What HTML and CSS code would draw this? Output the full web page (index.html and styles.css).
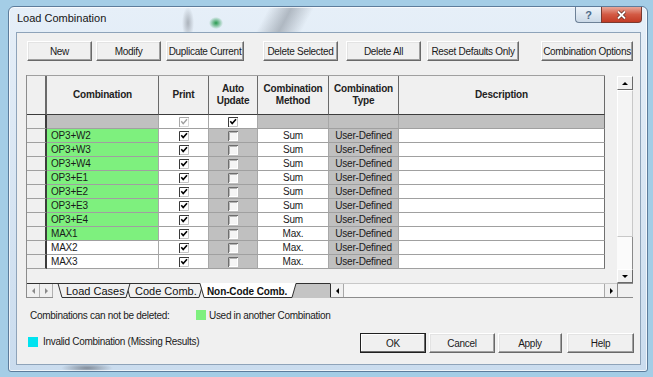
FILE: index.html
```html
<!DOCTYPE html>
<html lang="en">
<head>
    <meta charset="UTF-8">
    <title>Load Combination</title>
    <link rel="stylesheet" href="styles.css">
</head>
<body>
    <svg class="defs" width="0" height="0" aria-hidden="true">
        <defs>
            <symbol id="cb-on" viewBox="0 0 10 10">
                <rect width="10" height="10" fill="#fff"/>
                <path d="M0.5 10V0.5H10" fill="none" stroke="#3a3a3a"/>
                <path d="M9.5 1V9.5H1" fill="none" stroke="#c4c4c4"/>
                <path d="M2.3 4.3L4.2 6.6L8 2.2" fill="none" stroke="#000" stroke-width="1.6"/>
            </symbol>
            <symbol id="cb-dis" viewBox="0 0 10 10">
                <rect width="10" height="10" fill="#fff"/>
                <path d="M0.5 10V0.5H10" fill="none" stroke="#a8a8a8"/>
                <path d="M9.5 1V9.5H1" fill="none" stroke="#d8d8d8"/>
                <path d="M2.3 4.3L4.2 6.6L8 2.2" fill="none" stroke="#a0a0a0" stroke-width="1.4"/>
            </symbol>
            <symbol id="cb-off" viewBox="0 0 10 10">
                <rect width="10" height="10" fill="#f5f5f5"/>
                <path d="M0.5 10V0.5H10" fill="none" stroke="#6e6e6e"/>
                <path d="M1.5 9V1.5H9" fill="none" stroke="#b4b4b4"/>
                <path d="M9.5 1V9.5H1" fill="none" stroke="#ffffff"/>
            </symbol>
        </defs>
    </svg>

    <div class="window">
        <div class="titlebar">
            <span class="title">Load Combination</span>
            <div class="caption">
                <span class="cap-help">?</span>
                <span class="cap-close">
                    <svg width="11" height="10" viewBox="0 0 11 10">
                        <path d="M2 1.5L9 8.5M9 1.5L2 8.5" stroke="#5a2a22" stroke-width="3.2"/>
                        <path d="M2 1.5L9 8.5M9 1.5L2 8.5" stroke="#fff" stroke-width="1.8"/>
                    </svg>
                </span>
            </div>
        </div>

        <div class="client">
            <div class="toolbar">
                <button class="btn w65">New</button>
                <button class="btn w65 ml4">Modify</button>
                <button class="btn w78 ml5">Duplicate Current</button>
                <button class="btn w75 ml19">Delete Selected</button>
                <button class="btn w75 ml8">Delete All</button>
                <button class="btn w92 ml6">Reset Defaults Only</button>
                <button class="btn w92 push">Combination Options</button>
            </div>

            <div class="grid">
                <div class="grid-main">
                    <div class="cells">
                        <div class="row head">
                            <div class="rh"></div>
                            <div>Combination</div>
                            <div>Print</div>
                            <div>Auto<br>Update</div>
                            <div>Combination<br>Method</div>
                            <div>Combination<br>Type</div>
                            <div>Description</div>
                        </div>
                        <div class="row filter">
                            <div class="rh"></div>
                            <div class="gray"></div>
                            <div class="mid"><svg class="cb"><use href="#cb-dis"/></svg></div>
                            <div class="mid"><svg class="cb"><use href="#cb-on"/></svg></div>
                            <div class="gray"></div>
                            <div class="gray"></div>
                            <div class="gray"></div>
                        </div>
                        <div class="row">
                            <div class="rh"></div><div class="name used">OP3+W2</div>
                            <div class="mid"><svg class="cb"><use href="#cb-on"/></svg></div>
                            <div class="mid gray"><svg class="cb"><use href="#cb-off"/></svg></div>
                            <div class="mid">Sum</div><div class="mid gray">User-Defined</div><div></div>
                        </div>
                        <div class="row">
                            <div class="rh"></div><div class="name used">OP3+W3</div>
                            <div class="mid"><svg class="cb"><use href="#cb-on"/></svg></div>
                            <div class="mid gray"><svg class="cb"><use href="#cb-off"/></svg></div>
                            <div class="mid">Sum</div><div class="mid gray">User-Defined</div><div></div>
                        </div>
                        <div class="row">
                            <div class="rh"></div><div class="name used">OP3+W4</div>
                            <div class="mid"><svg class="cb"><use href="#cb-on"/></svg></div>
                            <div class="mid gray"><svg class="cb"><use href="#cb-off"/></svg></div>
                            <div class="mid">Sum</div><div class="mid gray">User-Defined</div><div></div>
                        </div>
                        <div class="row">
                            <div class="rh"></div><div class="name used">OP3+E1</div>
                            <div class="mid"><svg class="cb"><use href="#cb-on"/></svg></div>
                            <div class="mid gray"><svg class="cb"><use href="#cb-off"/></svg></div>
                            <div class="mid">Sum</div><div class="mid gray">User-Defined</div><div></div>
                        </div>
                        <div class="row">
                            <div class="rh"></div><div class="name used">OP3+E2</div>
                            <div class="mid"><svg class="cb"><use href="#cb-on"/></svg></div>
                            <div class="mid gray"><svg class="cb"><use href="#cb-off"/></svg></div>
                            <div class="mid">Sum</div><div class="mid gray">User-Defined</div><div></div>
                        </div>
                        <div class="row">
                            <div class="rh"></div><div class="name used">OP3+E3</div>
                            <div class="mid"><svg class="cb"><use href="#cb-on"/></svg></div>
                            <div class="mid gray"><svg class="cb"><use href="#cb-off"/></svg></div>
                            <div class="mid">Sum</div><div class="mid gray">User-Defined</div><div></div>
                        </div>
                        <div class="row">
                            <div class="rh"></div><div class="name used">OP3+E4</div>
                            <div class="mid"><svg class="cb"><use href="#cb-on"/></svg></div>
                            <div class="mid gray"><svg class="cb"><use href="#cb-off"/></svg></div>
                            <div class="mid">Sum</div><div class="mid gray">User-Defined</div><div></div>
                        </div>
                        <div class="row">
                            <div class="rh"></div><div class="name used">MAX1</div>
                            <div class="mid"><svg class="cb"><use href="#cb-on"/></svg></div>
                            <div class="mid gray"><svg class="cb"><use href="#cb-off"/></svg></div>
                            <div class="mid">Max.</div><div class="mid gray">User-Defined</div><div></div>
                        </div>
                        <div class="row">
                            <div class="rh"></div><div class="name">MAX2</div>
                            <div class="mid"><svg class="cb"><use href="#cb-on"/></svg></div>
                            <div class="mid gray"><svg class="cb"><use href="#cb-off"/></svg></div>
                            <div class="mid">Max.</div><div class="mid gray">User-Defined</div><div></div>
                        </div>
                        <div class="row">
                            <div class="rh"></div><div class="name">MAX3</div>
                            <div class="mid"><svg class="cb"><use href="#cb-on"/></svg></div>
                            <div class="mid gray"><svg class="cb"><use href="#cb-off"/></svg></div>
                            <div class="mid">Max.</div><div class="mid gray">User-Defined</div><div></div>
                        </div>
                    </div>

                    <div class="vscroll">
                        <div class="sbtn"><span class="arr up"></span></div>
                        <div class="thumb"></div>
                        <div class="track"></div>
                        <div class="sbtn"><span class="arr down"></span></div>
                    </div>
                </div>

                <div class="grid-foot">
                    <div class="nav">
                        <div class="nbtn"><span class="arr left dim"></span></div>
                        <div class="nbtn"><span class="arr right dim"></span></div>
                    </div>
                    <svg class="tabs" width="277" height="15" viewBox="0 0 277 15">
                        <rect width="277" height="15" fill="#f0f0f0"/>
                        <polygon points="243,0 277,0 277,15 239,15" fill="#c4c4c4"/>
                        <line x1="0" y1="0.5" x2="277" y2="0.5" stroke="#303030"/>
                        <polygon points="73,0.5 77,14.5 146,14.5 150,0.5" fill="#f0f0f0" stroke="#303030"/>
                        <polygon points="5,0.5 9,14.5 73,14.5 77,0.5" fill="#f0f0f0" stroke="#303030"/>
                        <polygon points="147,0 151,14 239,14 243,0" fill="#fff"/>
                        <path d="M147,0.5 L151,14.5 L239,14.5 L243,0.5" fill="none" stroke="#303030"/>
                        <text x="13" y="11.5" class="tab-text">Load Cases</text>
                        <text x="82" y="11.5" class="tab-text">Code Comb.</text>
                        <text x="154" y="11.5" class="tab-text active">Non-Code Comb.</text>
                    </svg>
                    <div class="hscroll">
                        <div class="hbtn"><span class="arr left"></span></div>
                        <div class="htrack"></div>
                        <div class="hbtn"><span class="arr right"></span></div>
                    </div>
                    <div class="corner"></div>
                </div>
            </div>

            <div class="legend">
                <span class="legend-label">Combinations can not be deleted:</span>
                <span class="swatch green"></span>
                <span>Used in another Combination</span>
            </div>

            <div class="footer">
                <span class="swatch cyan"></span>
                <span>Invalid Combination (Missing Results)</span>
                <div class="actions">
                    <button class="btn default w66">OK</button>
                    <button class="btn w66 ml3">Cancel</button>
                    <button class="btn w64 ml3">Apply</button>
                    <button class="btn w67 ml5">Help</button>
                </div>
            </div>
        </div>
    </div>
</body>
</html>
```

FILE: styles.css
```css
* {
    box-sizing: border-box;
}

body {
    margin: 0;
    width: 653px;
    height: 377px;
    padding: 6px 5px 5px 8px;
    overflow: hidden;
    background: #a4cde6;
    font-family: "Liberation Sans", Arial, sans-serif;
    font-size: 10px;
    color: #1a1a1a;
}

.defs {
    position: absolute;
}

.window {
    width: 640px;
    height: 366px;
    padding: 0 6px 6px 7px;
    display: flex;
    flex-direction: column;
    border: 1px solid #5d7c9b;
    border-radius: 6px 6px 3px 3px;
    box-shadow: inset 0 0 0 1px rgba(255, 255, 255, 0.7);
    background:
        radial-gradient(7px 6px at 207px 16px, rgba(30, 150, 70, 0.95), rgba(30, 150, 70, 0)),
        radial-gradient(6px 16px at 179px 16px, rgba(115, 120, 128, 0.5), rgba(115, 120, 128, 0)),
        radial-gradient(26px 5px at 78px 361px, rgba(70, 75, 85, 0.55), rgba(70, 75, 85, 0)),
        linear-gradient(118deg, rgba(110, 118, 128, 0) 30%, rgba(110, 118, 128, 0.45) 50%, rgba(110, 118, 128, 0) 70%) 226px 0 / 100px 26px no-repeat,
        linear-gradient(#e6eff8, #cadcee);
}

.titlebar {
    height: 25px;
    display: flex;
    align-items: flex-start;
}

.title {
    margin: 5px 0 0 1px;
    font-size: 11px;
    color: #151515;
}

.caption {
    display: flex;
    margin-left: auto;
    margin-right: -1px;
}

.cap-help,
.cap-close {
    height: 16px;
    display: flex;
    align-items: center;
    justify-content: center;
    border: 1px solid #6d8197;
    border-top: none;
}

.cap-help {
    width: 26px;
    border-radius: 0 0 0 4px;
    border-right: none;
    background: linear-gradient(#eef4fa, #cbd9e7);
    color: #4d6a88;
    font-size: 11px;
    font-weight: bold;
}

.cap-close {
    width: 41px;
    border-radius: 0 0 4px 0;
    border-color: #7a3a30;
    background: linear-gradient(#e8a89a, #d35a44 50%, #c23a24);
}

.client {
    flex: 1;
    padding: 8px 7px 0 9px;
    border: 1px solid #8ea3b9;
    background: #f0f0f0;
}

.toolbar {
    display: flex;
    height: 20px;
    padding-left: 1px;
}

.btn {
    height: 20px;
    padding: 0;
    font-family: "Liberation Sans", Arial, sans-serif;
    font-size: 10px;
    letter-spacing: -0.3px;
    color: #1a1a1a;
    background: #f0f0f0;
    border: 1px solid;
    border-color: #ffffff #696969 #696969 #ffffff;
    box-shadow: inset -1px -1px #a0a0a0, inset 1px 1px #e3e3e3;
}

.btn.default {
    border-color: #202020;
    box-shadow: inset -1px -1px #696969, inset 1px 1px #ffffff;
}

.w64 { width: 64px; }
.w65 { width: 65px; }
.w66 { width: 66px; }
.w67 { width: 67px; }
.w75 { width: 75px; }
.w78 { width: 78px; }
.w92 { width: 92px; }
.ml3 { margin-left: 3px; }
.ml4 { margin-left: 4px; }
.ml5 { margin-left: 5px; }
.ml6 { margin-left: 6px; }
.ml8 { margin-left: 8px; }
.ml19 { margin-left: 19px; }
.push { margin-left: auto; }

/* grid control */
.grid {
    margin-top: 14px;
    width: 607px;
    border-left: 1px solid #8c8c8c;
}

.grid-main {
    display: flex;
    height: 208px;
}

.cells {
    width: 578px;
    border-top: 1px solid #a0a0a0;
    align-self: flex-start;
}

.row {
    display: grid;
    grid-template-columns: 20px 112px 50px 49px 71px 70px 206px;
    height: 14px;
    letter-spacing: -0.2px;
}

.row > div {
    display: flex;
    align-items: center;
    background: #fff;
    border-right: 1px solid #a8a8a8;
    border-bottom: 1px solid #a0a0a0;
}

.row > div:last-child {
    border-right-color: #707070;
}

.row > .rh {
    background: #f0f0f0;
    border-right: 2px solid #3c3c3c;
}

.row.head {
    height: 39px;
    font-weight: bold;
    line-height: 12px;
    color: #222;
}

.row.head > div {
    justify-content: center;
    text-align: center;
    background: #f0f0f0;
    border-right-color: #6a6a6a;
    border-bottom-color: #3c3c3c;
}

.row > .gray {
    background: #c0c0c0;
}

.row > .mid {
    justify-content: center;
}

.row > .name {
    padding-left: 4px;
}

.row > .used {
    background: #7ef07e;
}

.cb {
    width: 10px;
    height: 10px;
}

.vscroll {
    width: 16px;
    height: 207px;
    margin: 1px 0 0 12px;
    display: flex;
    flex-direction: column;
    background: #f7f7f7;
}

.sbtn,
.hbtn,
.nbtn {
    display: flex;
    align-items: center;
    justify-content: center;
    background: #f0f0f0;
}

.sbtn {
    height: 14px;
    border: 1px solid;
    border-color: #fff #6a6a6a #6a6a6a #fff;
}

.thumb {
    height: 147px;
    background: #f4f4f4;
    border: 1px solid;
    border-color: #fff #c8c8c8 #c8c8c8 #fff;
}

.track {
    flex: 1;
    background: #fbfbfb;
    border-right: 1px solid #8a8a8a;
}

.arr {
    width: 0;
    height: 0;
    border: 3px solid transparent;
}

.arr.up {
    border-top: none;
    border-bottom-color: #000;
}

.arr.down {
    border-bottom: none;
    border-top-color: #000;
}

.arr.left {
    border-left: none;
    border-right-color: #000;
    border-width: 3px 3px 3px 0;
}

.arr.right {
    border-right: none;
    border-left-color: #000;
    border-width: 3px 0 3px 3px;
}

.arr.dim.left {
    border-right-color: #8a8a8a;
}

.arr.dim.right {
    border-left-color: #8a8a8a;
}

.grid-foot {
    display: flex;
    height: 15px;
    border-bottom: 1px solid #8c8c8c;
}

.nav {
    display: flex;
    width: 26px;
    border-top: 1px solid #303030;
}

.nbtn {
    width: 13px;
    border-right: 1px solid #b0b0b0;
}

.tabs {
    display: block;
    flex: none;
}

.tab-text {
    font-family: "Liberation Sans", Arial, sans-serif;
    font-size: 11px;
    fill: #111;
}

.tab-text.active {
    font-weight: bold;
    font-size: 10px;
    letter-spacing: -0.1px;
}

.hscroll {
    display: flex;
    width: 287px;
    border-left: 1px solid #303030;
    border-top: 1px solid #c8c8c8;
    background: #f7f7f7;
}

.hbtn {
    width: 13px;
    border-right: 1px solid #a8a8a8;
}

.hbtn:last-child {
    border-right: none;
    border-left: 1px solid #a8a8a8;
}

.htrack {
    flex: 1;
}

.corner {
    width: 16px;
    background: #f0f0f0;
    border-top: 1px solid #8c8c8c;
    border-left: 1px solid #8c8c8c;
}

/* legend and footer */
.legend {
    display: flex;
    align-items: center;
    height: 12px;
    margin-top: 11px;
    padding-left: 4px;
    letter-spacing: -0.3px;
}

.legend-label {
    width: 166px;
}

.swatch {
    width: 10px;
    height: 10px;
    margin-right: 3px;
    flex: none;
}

.swatch.green {
    background: #7ef07e;
}

.swatch.cyan {
    background: #00e3f0;
    margin: 4px 5px 0 2px;
}

.footer {
    display: flex;
    align-items: flex-start;
    margin-top: 12px;
    letter-spacing: -0.3px;
}

.footer > span:nth-child(2) {
    margin-top: 3px;
}

.actions {
    display: flex;
    margin-left: auto;
    margin-right: -1px;
}
```
